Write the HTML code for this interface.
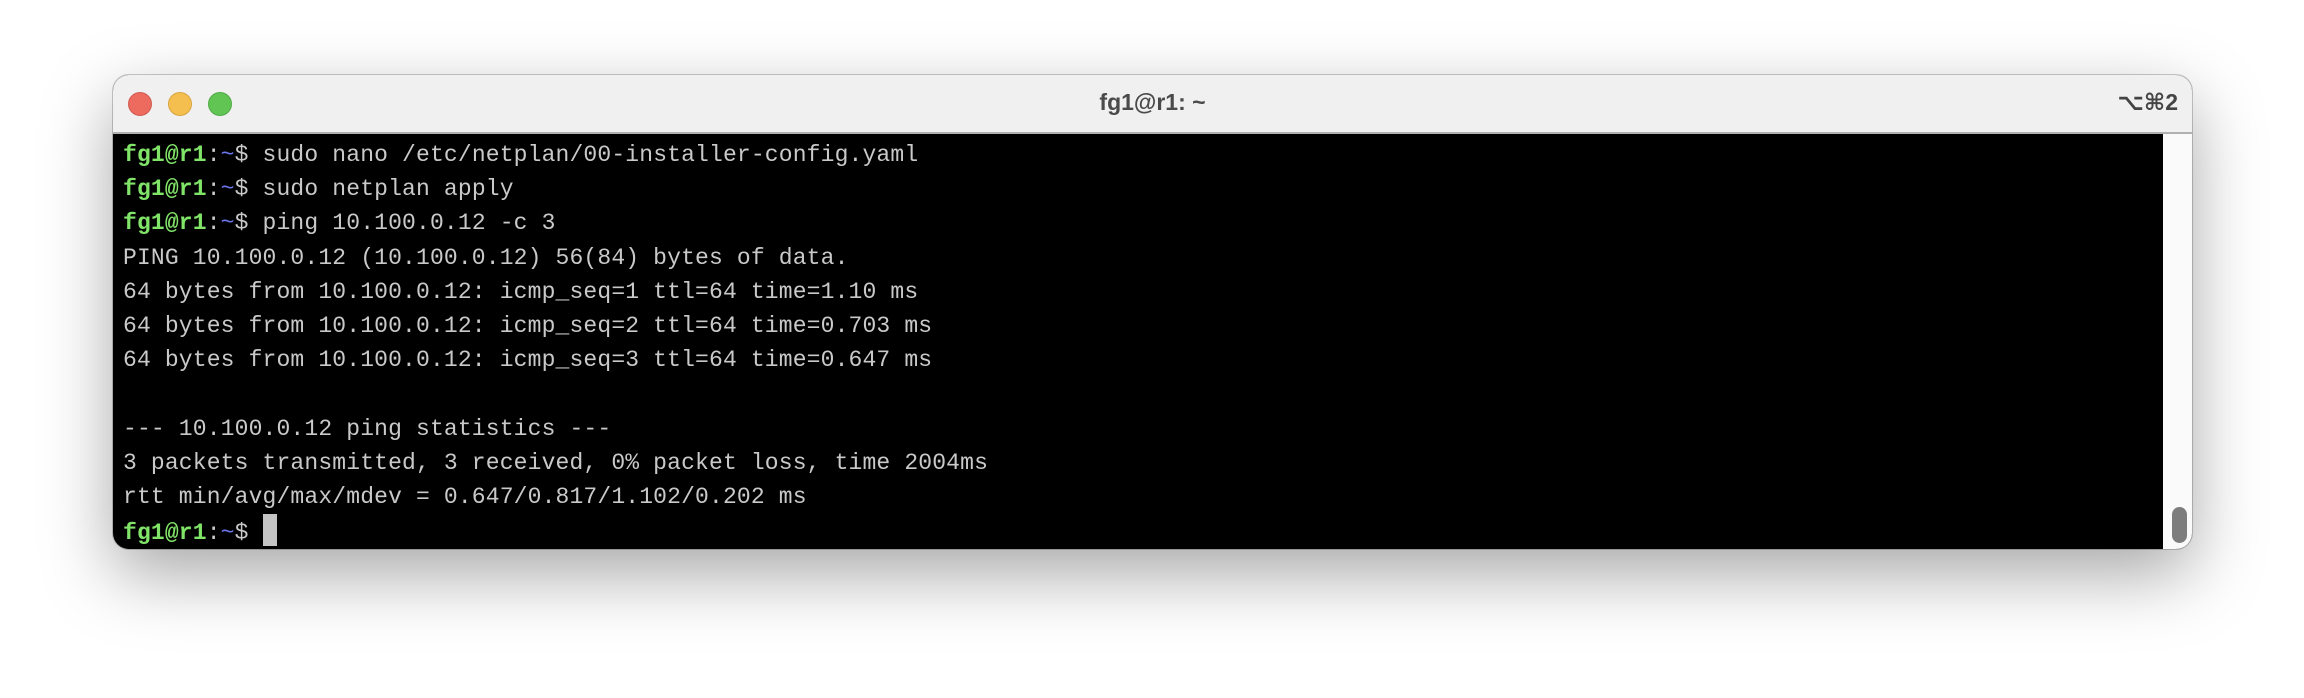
<!DOCTYPE html>
<html><head><meta charset="utf-8"><style>
html,body{margin:0;padding:0;width:2304px;height:698px;background:#fff;overflow:hidden}
.win{position:absolute;left:113px;top:75px;width:2079px;height:474px;border-radius:16px;overflow:hidden;background:#000;box-shadow:0 25px 70px rgba(0,0,0,.35),0 0 0 1px rgba(0,0,0,.2)}
.tb{position:absolute;left:0;top:0;right:0;height:57px;background:#f1f0f1;border-bottom:2px solid #b0b0b0}
.l{position:absolute;top:17px;width:23px;height:23px;border-radius:50%}
.title{position:absolute;left:0;right:0;top:14px;text-align:center;font:bold 23px "Liberation Sans",sans-serif;color:#4a4a4a}
.sc{position:absolute;right:14px;top:14px;font:bold 23px "Liberation Sans","DejaVu Sans",sans-serif;color:#444}
.term{position:absolute;left:10px;top:63px;font:23px/34.2px "Liberation Mono",monospace;color:#c9c9c9;white-space:pre;letter-spacing:0.15px}
.g{color:#80e468;font-weight:bold}.b{color:#6c78f2}
.cur{display:inline-block;width:14px;height:32px;background:#c4c4c4;vertical-align:-7px}
.sb{position:absolute;right:0;top:59px;width:29px;bottom:0;background:#fafafa}
.th{position:absolute;right:5px;bottom:6px;width:15px;height:36px;border-radius:8px;background:#7d7d7d}
</style></head><body>
<div class="win">
<div class="tb">
<div class="l" style="left:15px;background:#ec6a5e;border:1px solid #d25a4f;width:22px;height:22px"></div>
<div class="l" style="left:55px;background:#f4bf4f;border:1px solid #d9a53f;width:22px;height:22px"></div>
<div class="l" style="left:95px;background:#61c554;border:1px solid #4fab43;width:22px;height:22px"></div>
<div class="title">fg1@r1: ~</div>
<div class="sc">⌥⌘2</div>
</div>
<div class="term"><span class="g">fg1@r1</span>:<span class="b">~</span>$ sudo nano /etc/netplan/00-installer-config.yaml
<span class="g">fg1@r1</span>:<span class="b">~</span>$ sudo netplan apply
<span class="g">fg1@r1</span>:<span class="b">~</span>$ ping 10.100.0.12 -c 3
PING 10.100.0.12 (10.100.0.12) 56(84) bytes of data.
64 bytes from 10.100.0.12: icmp_seq=1 ttl=64 time=1.10 ms
64 bytes from 10.100.0.12: icmp_seq=2 ttl=64 time=0.703 ms
64 bytes from 10.100.0.12: icmp_seq=3 ttl=64 time=0.647 ms

--- 10.100.0.12 ping statistics ---
3 packets transmitted, 3 received, 0% packet loss, time 2004ms
rtt min/avg/max/mdev = 0.647/0.817/1.102/0.202 ms
<span class="g">fg1@r1</span>:<span class="b">~</span>$ <span class="cur"></span></div>
<div class="sb"><div class="th"></div></div>
</div>
</body></html>
